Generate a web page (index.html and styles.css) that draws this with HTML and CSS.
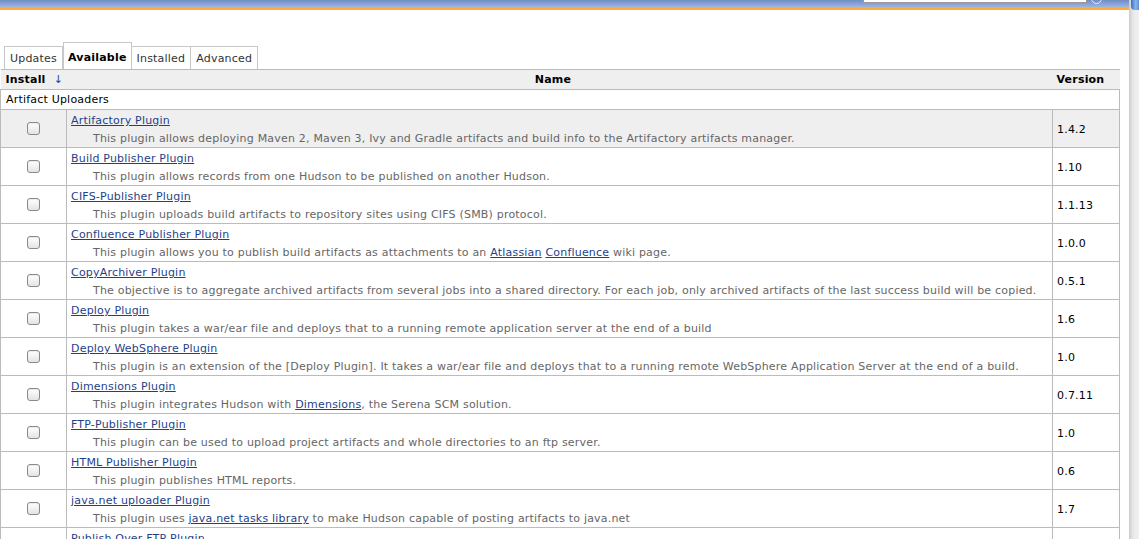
FILE: index.html
```html
<!DOCTYPE html>
<html>
<head>
<meta charset="utf-8">
<link rel="stylesheet" href="styles.css">
</head>
<body>
<div class="page">
  <div class="main">
    <div class="topbar">
      <div class="top-tools">
        <div class="search"></div>
        <div class="help"></div>
      </div>
    </div>
    <div class="tabs">
      <div class="tab">Updates</div>
      <div class="tab active">Available</div>
      <div class="tab">Installed</div>
      <div class="tab">Advanced</div>
    </div>
    <table class="plugins">
      <colgroup><col class="c-install"><col class="c-name"><col class="c-version"></colgroup>
      <thead>
        <tr><th class="h-install">Install <span class="arrow">↓</span></th><th class="h-name">Name</th><th class="h-version">Version</th></tr>
      </thead>
      <tbody>
        <tr class="cat"><td colspan="3">Artifact Uploaders</td></tr>
        <tr class="hover">
          <td class="cb"><span class="check"></span></td>
          <td class="nm"><a href="#" class="plink">Artifactory Plugin</a><div class="excerpt">This plugin allows deploying Maven 2, Maven 3, Ivy and Gradle artifacts and build info to the Artifactory artifacts manager.</div></td>
          <td class="ver">1.4.2</td>
        </tr>
        <tr>
          <td class="cb"><span class="check"></span></td>
          <td class="nm"><a href="#" class="plink">Build Publisher Plugin</a><div class="excerpt">This plugin allows records from one Hudson to be published on another Hudson.</div></td>
          <td class="ver">1.10</td>
        </tr>
        <tr>
          <td class="cb"><span class="check"></span></td>
          <td class="nm"><a href="#" class="plink">CIFS-Publisher Plugin</a><div class="excerpt">This plugin uploads build artifacts to repository sites using CIFS (SMB) protocol.</div></td>
          <td class="ver">1.1.13</td>
        </tr>
        <tr>
          <td class="cb"><span class="check"></span></td>
          <td class="nm"><a href="#" class="plink">Confluence Publisher Plugin</a><div class="excerpt">This plugin allows you to publish build artifacts as attachments to an <a href="#">Atlassian</a> <a href="#">Confluence</a> wiki page.</div></td>
          <td class="ver">1.0.0</td>
        </tr>
        <tr>
          <td class="cb"><span class="check"></span></td>
          <td class="nm"><a href="#" class="plink">CopyArchiver Plugin</a><div class="excerpt">The objective is to aggregate archived artifacts from several jobs into a shared directory. For each job, only archived artifacts of the last success build will be copied.</div></td>
          <td class="ver">0.5.1</td>
        </tr>
        <tr>
          <td class="cb"><span class="check"></span></td>
          <td class="nm"><a href="#" class="plink">Deploy Plugin</a><div class="excerpt">This plugin takes a war/ear file and deploys that to a running remote application server at the end of a build</div></td>
          <td class="ver">1.6</td>
        </tr>
        <tr>
          <td class="cb"><span class="check"></span></td>
          <td class="nm"><a href="#" class="plink">Deploy WebSphere Plugin</a><div class="excerpt">This plugin is an extension of the [Deploy Plugin]. It takes a war/ear file and deploys that to a running remote WebSphere Application Server at the end of a build.</div></td>
          <td class="ver">1.0</td>
        </tr>
        <tr>
          <td class="cb"><span class="check"></span></td>
          <td class="nm"><a href="#" class="plink">Dimensions Plugin</a><div class="excerpt">This plugin integrates Hudson with <a href="#">Dimensions</a>, the Serena SCM solution.</div></td>
          <td class="ver">0.7.11</td>
        </tr>
        <tr>
          <td class="cb"><span class="check"></span></td>
          <td class="nm"><a href="#" class="plink">FTP-Publisher Plugin</a><div class="excerpt">This plugin can be used to upload project artifacts and whole directories to an ftp server.</div></td>
          <td class="ver">1.0</td>
        </tr>
        <tr>
          <td class="cb"><span class="check"></span></td>
          <td class="nm"><a href="#" class="plink">HTML Publisher Plugin</a><div class="excerpt">This plugin publishes HTML reports.</div></td>
          <td class="ver">0.6</td>
        </tr>
        <tr>
          <td class="cb"><span class="check"></span></td>
          <td class="nm"><a href="#" class="plink">java.net uploader Plugin</a><div class="excerpt">This plugin uses <a href="#">java.net tasks library</a> to make Hudson capable of posting artifacts to java.net</div></td>
          <td class="ver">1.7</td>
        </tr>
        <tr>
          <td class="cb"><span class="check"></span></td>
          <td class="nm"><a href="#" class="plink">Publish Over FTP Plugin</a><div class="excerpt">Send build artifacts over FTP</div></td>
          <td class="ver">1.1</td>
        </tr>
      </tbody>
    </table>
  </div>
  <div class="scrollbar"><div class="thumb"></div></div>
</div>
</body>
</html>
```

FILE: styles.css
```css
html, body {
  margin: 0;
  padding: 0;
  overflow: hidden;
  background: #fff;
}
body {
  font-family: "DejaVu Sans", Verdana, sans-serif;
  font-size: 11px;
  letter-spacing: 0.2px;
  color: #000;
}
.page {
  display: flex;
  height: 539px;
  overflow: hidden;
}
.main {
  flex: 1;
  min-width: 0;
  padding-right: 9px;
}
.topbar {
  height: 7px;
  background: linear-gradient(#6f8dc8, #9fb4de);
  border-bottom: 3px solid #fbac3c;
  margin-right: -9px;
  overflow: hidden;
}
.top-tools {
  display: flex;
  justify-content: flex-end;
  align-items: flex-start;
  padding-right: 27px;
}
.search {
  width: 222px;
  height: 2px;
  background: #fff;
  border: 1px solid #999;
  border-top: none;
}
.help {
  width: 9px;
  height: 9px;
  border: 1px solid #e8ecf4;
  border-radius: 50%;
  margin-left: 4px;
  margin-top: -7px;
}
.tabs {
  display: flex;
  align-items: flex-end;
  padding-left: 4px;
  margin-top: 32px;
  height: 27px;
}
.tab {
  border: 1px solid #c8c8c8;
  border-bottom: none;
  height: 22px;
  line-height: 24px;
  padding: 0 5px 0 5px;
  color: #333;
}
.tab + .tab {
  border-left: none;
}
.tab.active {
  height: 26px;
  line-height: 30px;
  font-weight: bold;
  color: #000;
  padding: 0 4px;
  border-left: 1px solid #c8c8c8;
}
.tab.active + .tab {
  border-left: none;
}
.plugins {
  width: 1120px;
  border-collapse: collapse;
  table-layout: fixed;
}
.c-install { width: 66px; }
.c-version { width: 67px; }
.plugins th {
  background: #efefef;
  border-top: 1px solid #bbb;
  border-bottom: 1px solid #bbb;
  height: 19px;
  line-height: 19px;
  padding: 0;
  font-weight: bold;
}
.h-install {
  text-align: left;
  padding-left: 5px !important;
  white-space: nowrap;
}
.arrow {
  color: #204a87;
  font-weight: normal;
  margin-left: 4px;
}
.h-name {
  text-align: center;
  padding-right: 13px !important;
}
.h-version {
  text-align: left;
  padding-left: 4px !important;
}
.plugins td {
  border: 1px solid #bbb;
  padding: 0;
}
.cat td {
  height: 19px;
  line-height: 19px;
  padding: 0 0 0 5px;
}
.hover td {
  background: #efefef;
}
.cb {
  text-align: center;
  vertical-align: middle;
  line-height: 12px;
}
.check {
  display: inline-block;
  width: 11px;
  height: 11px;
  border: 1px solid #8a8a8a;
  border-radius: 3px;
  background: linear-gradient(#ffffff, #e4e4e4);
  box-shadow: inset 0 1px 1px rgba(0,0,0,0.08);
  vertical-align: middle;
}
.nm {
  height: 38px;
  box-sizing: border-box;
  padding: 3px 4px 0 4px !important;
  vertical-align: top;
  line-height: 15px;
}
.plink {
  color: #1f3f8a;
}
.excerpt {
  color: #666;
  line-height: 15px;
  padding-left: 22px;
  margin-top: 3px;
  white-space: nowrap;
  overflow: hidden;
}
.excerpt a {
  color: #1f3f8a;
}
.ver {
  padding: 2px 0 0 4px !important;
  vertical-align: middle;
  line-height: 15px;
}
.scrollbar {
  width: 10px;
  height: 539px;
  background: linear-gradient(90deg, #c9c9c9 0, #dcdcdc 2px, #ebebeb 5px, #f0f0f0 10px);
  position: relative;
}
.thumb {
  position: absolute;
  left: 2px;
  top: -4px;
  width: 8px;
  height: 14px;
  border-radius: 4px 0 0 4px;
  background: linear-gradient(90deg, #3a6fc4, #8fb4ea 60%, #5d8fd8);
}
```
